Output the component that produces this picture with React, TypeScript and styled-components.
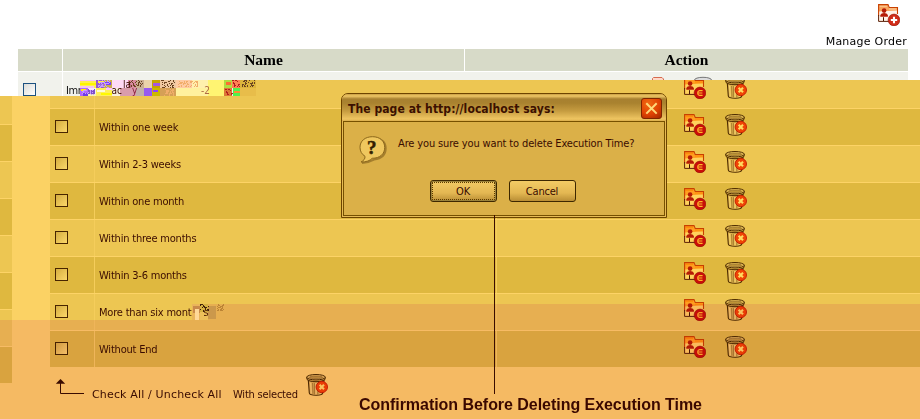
import React from "react";
import styled, { createGlobalStyle } from "styled-components";

const Global = createGlobalStyle`
  *{box-sizing:border-box}
  body{margin:0;background:#fff;overflow:hidden}
`;

const Page = styled.main`
  position: relative; width: 920px; height: 419px; overflow: hidden;
  display: flex; flex-direction: column; background: #fff;
  font-family: "DejaVu Sans Condensed", Tahoma, "DejaVu Sans", sans-serif;
  font-size: 11px; color: #3a0c00;
`;
const Toolbar = styled.header`
  height: 49px; flex: none; display: flex; flex-direction: column; align-items: flex-end;
  padding: 4px 13px 0 0; color: #000;
`;
const ToolIcon = styled.div`height: 22px; margin-right: 7px; line-height: 0;`;
const Label = styled.span<{ $ls?: number; $wide?: boolean }>`
  font-family: ${p => (p.$wide ? '"DejaVu Sans", Verdana' : '"DejaVu Sans Condensed", Tahoma')}, sans-serif;
  font-size: 11px; letter-spacing: ${p => p.$ls ?? -0.2}px; white-space: pre; line-height: 14px;
`;
const ToolLabel = styled(Label)`margin-top: 9px;`;

const HeadRow = styled.div`
  display: grid; grid-template-columns: 44px 401px 443px; column-gap: 1px; width: 890px; height: 22px;
  margin: 0 0 1px 18px; flex: none;
`;
const HeadCell = styled.div`
  background: #d7dac8; color: #000; text-align: center;
  font: bold 15.5px/22px "Liberation Serif", "Times New Roman", serif;
`;
const FirstRow = styled.div`height: 24px; flex: none; display: flex;`;
const FirstLeft = styled.div`
  width: 238px; margin-left: 18px; background: #f1f2ec; display: flex; flex: none;
`;
const FirstCheckCell = styled.div`width: 45px; padding: 11px 0 0 5px; border-right: 1px solid #fff;`;
const FirstRight = styled.div`flex: 1; display: flex; flex-direction: column;`;
const FirstStrip = styled.div`height: 8px; width: 652px; background: #f1f2ec; overflow: hidden; line-height: 0;`;
const FirstFill = styled.div`flex: 1; background: #edc652;`;

const Body = styled.section`flex: 1; display: flex; background: #fbd264;`;
const Strip = styled.div`width: 12px; flex: none; margin-right: 38px;`;
const StripTop = styled.div`height: 28px; background: #edc652;`;
const StripRow = styled.div<{ $dark: boolean }>`
  height: 37px; border-top: 1px solid #fdd366; background: ${p => (p.$dark ? "#dfb83f" : "#edc652")};
`;
const Table = styled.div`flex: 1; display: flex; flex-direction: column;`;
const Row = styled.div<{ $dark?: boolean; $partial?: boolean }>`
  display: grid; grid-template-columns: 45px 402px 1fr; flex: none;
  height: ${p => (p.$partial ? 12 : 37)}px;
  border-top: ${p => (p.$partial ? 0 : 1)}px solid #fdd366;
  background: ${p => (p.$dark ? "#dfb83f" : "#edc652")};
`;
const Cell = styled.div<{ $last?: boolean; $pad: number; $up?: boolean }>`
  display: flex; align-items: center; padding-left: ${p => p.$pad}px; padding-bottom: ${p => (p.$up ? 2 : 0)}px;
  border-right: ${p => (p.$last ? "0" : "1px solid #f5cd5b")};
`;
const Actions = styled(Cell)<{ $clip?: boolean }>`
  gap: 19px; align-items: flex-start; padding-top: 5px;
  ${p => p.$clip && "padding-top:0; & > svg{margin-top:-19px; clip-path: inset(3px 0 0 0); flex:none}"}
`;
const Check = styled.span<{ $blue?: boolean }>`
  width: 13px; height: 13px; display: block;
  border: 1px solid ${p => (p.$blue ? "#1c5180" : "#472500")};
  background: ${p => (p.$blue ? "linear-gradient(135deg,#dcdcd7,#fff)" : "linear-gradient(135deg,#d5ae40,#fbd76a)")};
`;
const RowLabel = styled(Label)`padding-top: 2px;`;
const Footer = styled.footer`display: flex; align-items: flex-start; padding: 7px 0 0 5px;`;
const FootText = styled(Label)<{ $w: number }>`width: ${p => p.$w}px; margin-top: 14px;`;
const Arrow = styled.svg`margin: 5px 7px 0 0; flex: none;`;

const Tint = styled.div<{ $x: number; $y: number; $w: number }>`
  position: absolute; left: ${p => p.$x}px; top: ${p => p.$y}px; width: ${p => p.$w}px; bottom: 0;
  background: rgb(249, 226, 252); mix-blend-mode: multiply; pointer-events: none;
`;
const FirstNoise = styled.svg`position: absolute; left: 60px; top: 80px; overflow: visible;`;
const MonthNoise = styled.svg`position: absolute; left: 192px; top: 304px;`;

const Dialog = styled.div`
  position: absolute; left: 341px; top: 93px; width: 326px; height: 125px;
  border: 1px solid #6d4400; border-radius: 7px 7px 0 0; padding: 0 1px 1px;
  background: #e7bb55; display: flex; flex-direction: column;
`;
const TitleBar = styled.div`
  height: 27px; flex: none; display: flex; align-items: center; justify-content: space-between;
  padding: 2px 4px 0 6px; margin: 0 -1px; border-radius: 6px 6px 0 0;
  background: linear-gradient(#c79d43 0, #efc765 2px, #a78030 5px, #a9822f 9px, #c69c40 17px, #efc561 25px, #d8ac4a);
`;
const Title = styled.span`
  font: bold 12px/18px "DejaVu Sans Condensed", "Trebuchet MS", sans-serif; letter-spacing: 0.08px;
  padding-top: 1px; color: #3b1000; white-space: pre;
`;
const DialogBody = styled.div`
  flex: 1; border: 1px solid #765000; background: #dbb048; display: flex; flex-direction: column;
`;
const Message = styled.div`display: flex; height: 58px; padding: 14px 0 0 15px; gap: 10px;`;
const MessageText = styled(Label)`padding-top: 1px;`;
const Buttons = styled.div`display: flex; gap: 12px; padding-left: 86px;`;
const Button = styled.button<{ $focus?: boolean }>`
  width: 67px; height: 22px; padding: 1px 1px 0 0; border-radius: 3px; border: 1px solid #3d2700; color: #3a0c00;
  background: linear-gradient(#f3cb65, #e3b752 60%, #b98e35);
  outline: ${p => (p.$focus ? "1px dotted #5b3a00" : "none")}; outline-offset: -3px;
  box-shadow: ${p => (p.$focus ? "inset 0 0 0 1px #9a833d" : "none")};
  display: flex; align-items: center; justify-content: center;
`;
const Leader = styled.div`position: absolute; left: 494px; top: 215px; width: 1px; height: 179px; background: #3a0c00;`;
const Caption = styled.div`
  position: absolute; left: 359px; top: 395px; white-space: pre; color: #3a0800; letter-spacing: -0.04px;
  font: bold 16px/19px "Liberation Sans", Arial, sans-serif;
`;

const FolderIcon = ({ plus }: { plus?: boolean }) => (
  <svg width="22" height="22" viewBox="0 0 22 22">
    <path d="M.7 17.3V1Q.7.6 1.2.6H9.5Q10.4.6 10.4 1.5V2.6Q10.4 3.5 11.3 3.5H19.4V17.3Z" fill={plus ? "#fff3e8" : "#ffd25c"} />
    <path d="M.7 7.5V1Q.7.6 1.2.6H9.5Q10.4.6 10.4 1.5V2.6Q10.4 3.5 11.3 3.5H19.4V6.5Z" fill={plus ? "#f9a45c" : "#ff9f20"} />
    <path d="M1.5 2.2H9M11 5H18.5" stroke={plus ? "#fbd0a0" : "#ff8500"} />
    <path d="M.6 12V.6H10L11.2 3.5H19.5V10" fill="none" stroke="#c84000" strokeWidth="1.1" />
    <path d="M.6 11V17.4H11" fill="none" stroke="#5d2208" />
    <path d="M5.5 13.2V17" stroke="#4b1400" />
    <circle cx="6.1" cy="6.6" r="2.3" fill="#b51b05" />
    <path d="M2.3 12.8V11Q3.2 9 6.1 9T9.9 11V12.8Z" fill="#b51b05" />
    <circle cx="16" cy="16" r="5.9" fill={plus ? "#d02c18" : "#c90e08"} stroke="#951307" strokeWidth=".6" />
    {plus ? <path d="M16 12.8V19.2M12.8 16H19.2" stroke="#fff" strokeWidth="2.1" />
      : <path d="M18.6 13.6H15.4Q13.7 13.8 13.7 16T15.4 18.4H18.6M14 16H18.4" fill="none" stroke="#ffb82a" strokeWidth="1.2" />}
  </svg>
);

const TrashIcon = () => (
  <svg width="22" height="22" viewBox="0 0 22 22">
    <path d="M2.3 6 3.3 19Q3.5 21.2 10 21.3T16.8 19L18 6Z" fill="#dcb04c" stroke="#4d2c00" strokeWidth="1.1" />
    <path d="M4.6 8.5 5.3 19.6M10 9V20.5M14.7 9 14.2 20" stroke="#f5d16a" strokeWidth="1.4" />
    <path d="M6.6 9 7 19.8M8.5 9.2 8.6 20.2M12 9.2 11.8 20.2" stroke="#9b752a" strokeWidth=".8" />
    <path d="M.9 3V5.3Q3 7.7 10 7.7T19.1 5.3V3Z" fill="#d1a543" stroke="#4d2c00" />
    <ellipse cx="10" cy="3.2" rx="9.3" ry="2.7" fill="#e8c057" stroke="#4d2c00" />
    <ellipse cx="10" cy="3.4" rx="6.8" ry="1.3" fill="#bd9436" stroke="#86622a" strokeWidth=".6" />
    <circle cx="15.8" cy="13" r="5.7" fill="#f04505" stroke="#c41800" strokeWidth=".9" />
    <path d="M13.6 10.8 18 15.2M18 10.8 13.6 15.2" stroke="#ffdb60" strokeWidth="2.1" />
  </svg>
);

const CloseIcon = () => (
  <svg width="21" height="21" viewBox="0 0 21 21">
    <defs><radialGradient id="close" cx=".35" cy=".25" r=".9"><stop stopColor="#f06912" /><stop offset=".6" stopColor="#e04203" /><stop offset="1" stopColor="#a92b00" /></radialGradient></defs>
    <rect x=".5" y=".5" width="20" height="20" rx="2.5" fill="url(#close)" stroke="#7e2500" />
    <path d="M5.3 5.2 15.7 15.6M15.7 5.2 5.3 15.6" stroke="#ffd979" strokeWidth="2" />
  </svg>
);

const QuestionIcon = () => (
  <svg width="29" height="28" viewBox="0 0 29 28">
    <path d="M15 2Q26.8 3 26.7 12.6T15 23.6Q10 26.5 3 26.9" fill="none" stroke="#a47e2d" strokeWidth="2" />
    <path d="M13.5.7C6 .7 1 5 1 11.3c0 4 1.8 7 5 9 .3 2.5-1.3 4.3-4 5.7 5.2.1 9-1.3 11.2-3.7C21 22.2 25.7 18 25.7 11.5S21 .7 13.5.7Z" fill="#efc75e" stroke="#8c671b" />
    <text x="12.7" y="17.6" textAnchor="middle" fontFamily="Liberation Serif, serif" fontWeight="bold" fontSize="19" fill="#341d00" stroke="#341d00" strokeWidth=".5">?</text>
  </svg>
);

type Patch = [number, number, number, number, string];
const patches: Patch[] = [
  [0, 0, 16, 8, "#fff04e"], [0, 0, 16, 1, "#f4c6fa"], [0, 3, 16, 2, "#fdf500"], [0, 6, 14, 2, "#f5c4ef"],
  [0, 8, 8, 8, "#b266ff"], [1, 9, 5, 2, "#fff000"], [3, 13, 5, 3, "#6f3be8"], [8, 9, 7, 5, "#7f51c9"], [9, 8, 5, 2, "#f9e5ff"], [8, 14, 8, 2, "#f6f1b2"],
  [16, 0, 8, 8, "#9659cf"], [18, 1, 6, 2, "#ffe84b"], [20, 4, 5, 3, "#a16be2"], [24, 0, 8, 8, "#c9ad48"], [25, 2, 6, 3, "#7a3cff"],
  [16, 8, 16, 8, "#fff05b"], [17, 10, 8, 2, "#fffbd6"], [21, 13, 11, 2, "#fff900"], [26, 8, 6, 2, "#ffc3ff"],
  [32, 0, 16, 8, "#ffdaf6"], [32, 8, 8, 8, "#f7efdd"], [40, 8, 16, 8, "#d99cac"], [48, 0, 8, 8, "#d989a0"],
  [56, 0, 8, 8, "#c9ad91"], [56, 8, 8, 8, "#c1afaa"], [64, 8, 8, 8, "#975af0"], [64, 0, 8, 8, "#ead3aa"],
  [72, 0, 8, 8, "#c7a600"], [73, 3, 7, 3, "#a458e0"], [72, 8, 8, 8, "#ccb800"], [73, 10, 5, 2, "#8e42ff"],
  [80, 0, 16, 8, "#efc8a1"], [80, 8, 16, 8, "#d5a056"], [96, 0, 16, 8, "#ffcaa1"], [96, 8, 32, 8, "#fff19e"],
  [112, 0, 16, 8, "#fff0ad"], [128, 0, 16, 16, "#fff472"], [144, 0, 8, 8, "#b2db3f"], [146, 2, 5, 3, "#ff6c32"],
  [144, 8, 8, 8, "#dd7636"], [152, 0, 8, 8, "#ff8155"], [153, 8, 7, 8, "#51f14b"], [154, 11, 6, 2, "#ff8c34"],
  [160, 0, 16, 8, "#ddb53c"], [160, 8, 16, 8, "#e8bd4a"],
];
// Deterministic scatter of single pixels inside a block.
const dots = (x0: number, y0: number, w: number, h: number, seed: number) =>
  Array.from({ length: w * h }, (_, i) => i)
    .filter(i => {
      const v = Math.sin((i + 1) * 12.9898 + seed * 78.233) * 43758.5453;
      return v - Math.floor(v) < 0.4;
    })
    .map(i => `M${x0 + (i % w)} ${y0 + ((i / w) | 0)}h1v1h-1z`).join("");

const rows = ["Within one week", "Within 2-3 weeks", "Within one month", "Within three months", "Within 3-6 months", "More than six month", "Without End"];

export default function App() {
  return (
    <Page>
      <Global />
      <Toolbar>
        <ToolIcon><FolderIcon plus /></ToolIcon>
        <ToolLabel $wide $ls={0.24}>Manage Order</ToolLabel>
      </Toolbar>
      <HeadRow><HeadCell /><HeadCell>Name</HeadCell><HeadCell>Action</HeadCell></HeadRow>
      <FirstRow>
        <FirstLeft>
          <FirstCheckCell><Check $blue /></FirstCheckCell>
        </FirstLeft>
        <FirstRight>
          <FirstStrip>
            <svg width="652" height="8">
              <path d="M396.5 8V6.5L397.5 5.5H406L407.5 7V8" fill="#ffd9c8" stroke="#d66b50" />
              <ellipse cx="447" cy="8" rx="8.5" ry="2.7" fill="#ddd" stroke="#777" />
            </svg>
          </FirstStrip>
          <FirstFill />
        </FirstRight>
      </FirstRow>
      <Body>
        <Strip>
          <StripTop />
          {rows.map((r, i) => <StripRow key={r} $dark={i % 2 === 0} />)}
        </Strip>
        <Table>
          <Row $partial>
            <Cell $pad={5} /><Cell $pad={4} />
            <Actions $last $clip $pad={187}><FolderIcon /><TrashIcon /></Actions>
          </Row>
          {rows.map((name, i) => (
            <Row key={name} $dark={i % 2 === 0}>
              <Cell $pad={5} $up><Check /></Cell>
              <Cell $pad={4}><RowLabel>{name}</RowLabel></Cell>
              <Actions $last $pad={187}><FolderIcon /><TrashIcon /></Actions>
            </Row>
          ))}
          <Footer>
            <Arrow width="30" height="17" viewBox="0 0 30 17">
              <path d="M5.5 3V14.5H29" fill="none" stroke="#3a0c00" />
              <path d="M5.5 0 10.2 4.8H.8Z" fill="#3a0c00" />
            </Arrow>
            <FootText $wide $ls={0.16} $w={141}>Check All / Uncheck All</FootText>
            <FootText $w={73}>With selected</FootText>
            <TrashIcon />
          </Footer>
        </Table>
      </Body>

      <FirstNoise width="200" height="17" viewBox="60 80 200 17">
        <text x="66" y="94" fontFamily="DejaVu Sans Condensed" fontSize="11" letterSpacing="-.4" fill="#111">Imm</text>
        <g transform="translate(80 80)" shapeRendering="crispEdges">
          {patches.map(([x, y, w, h, c], i) => <rect key={i} x={x} y={y} width={w} height={h} fill={c} />)}
          <path d={dots(18, 0, 12, 8, 7) + dots(2, 10, 12, 5, 8)} fill="#c79bff" />
          <path d={dots(49, 0, 14, 7, 1) + dots(81, 0, 14, 8, 2) + dots(162, 0, 13, 7, 4)} fill="#6a4320" />
          <path d={dots(98, 1, 20, 6, 3) + dots(84, 9, 10, 7, 3)} fill="#f1ad6a" />
          <path d={dots(145, 9, 8, 6, 5) + dots(152, 0, 8, 7, 5)} fill="#b31f1d" />
        </g>
        <g fontFamily="DejaVu Sans Condensed" fontSize="10" fill="#3a0c00">
          <text x="123" y="88">la</text><text x="111.5" y="94">ac</text><text x="132" y="94" fill="#8b203c">y</text>
          <text x="201" y="94" fill="#b06b42">-2</text>
        </g>
      </FirstNoise>
      <Tint $x={0} $y={320} $w={208} />
      <Tint $x={208} $y={304} $w={712} />
      <MonthNoise width="36" height="16" viewBox="0 0 36 16">
        <g shapeRendering="crispEdges">
          <path d="M0 0H8V16H0Z" fill="#eab55b" />
          <path d="M1 2H8V9H1Z" fill="#c98a4a" /><path d="M3 5H7V16H3Z" fill="#ffd898" />
          <path d="M8 0H16V8H8Z" fill="#d6b141" /><path d="M8 8H16V16H8Z" fill="#edc05a" /><path d="M16 2H24V15H16Z" fill="#cb984b" />
          <path d={dots(8, 0, 9, 8, 2)} fill="#43230b" /><path d={dots(25, 0, 7, 7, 3)} fill="#bc8435" />
        </g>
        <text x="11.5" y="12" fontSize="11" fontFamily="DejaVu Sans Condensed" fill="#4a1900">s</text>
      </MonthNoise>

      <Dialog>
        <TitleBar><Title>The page at http://localhost says:</Title><CloseIcon /></TitleBar>
        <DialogBody>
          <Message><QuestionIcon /><MessageText $ls={-0.14}>Are you sure you want to delete Execution Time?</MessageText></Message>
          <Buttons>
            <Button $focus><Label>OK</Label></Button>
            <Button><Label>Cancel</Label></Button>
          </Buttons>
        </DialogBody>
      </Dialog>
      <Leader />
      <Caption>Confirmation Before Deleting Execution Time</Caption>
    </Page>
  );
}
